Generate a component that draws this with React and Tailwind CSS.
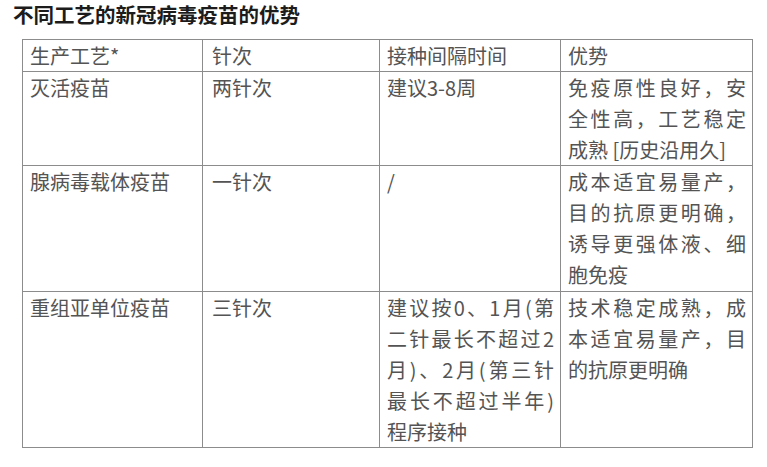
import React from "react";

const J = ({ children }) => (
  <span className="block text-justify [text-align-last:justify] whitespace-nowrap">{children}</span>
);
const L = ({ children }) => <span className="block whitespace-nowrap">{children}</span>;

function Cell({ children, className = "" }) {
  return <div className={"bg-white pl-[7px] pr-[6px] " + className}>{children}</div>;
}

export default function App() {
  return (
    <div
      className="w-[767px] h-[467px] bg-white overflow-hidden"
      style={{ fontFamily: '"Noto Sans CJK SC", "Noto Sans", sans-serif' }}
    >
      <h1 className="pl-[13px] pt-0 text-[20.5px] leading-[28px] font-bold text-[#1c1c1c]">
        不同工艺的新冠病毒疫苗的优势
      </h1>
      <div className="mt-[11px] ml-[22px] w-[731px] grid grid-cols-[179px_176px_180px_191px] grid-rows-[31px_93px_125px_155px] gap-px p-px bg-[#8c8c8c] text-[20px] leading-[31px] text-[#545454]">
        <Cell className="pl-2">生产工艺*</Cell>
        <Cell className="pl-[9px]">针次</Cell>
        <Cell className="pl-2">接种间隔时间</Cell>
        <Cell>优势</Cell>

        <Cell className="pl-2">灭活疫苗</Cell>
        <Cell className="pl-[9px]">两针次</Cell>
        <Cell className="pl-2">建议3-8周</Cell>
        <Cell>
          <J>免疫原性良好，安</J>
          <J>全性高，工艺稳定</J>
          <L>成熟 [历史沿用久]</L>
        </Cell>

        <Cell className="pl-2">腺病毒载体疫苗</Cell>
        <Cell className="pl-[9px]">一针次</Cell>
        <Cell className="pl-2">/</Cell>
        <Cell>
          <J>成本适宜易量产，</J>
          <J>目的抗原更明确，</J>
          <J>诱导更强体液、细</J>
          <L>胞免疫</L>
        </Cell>

        <Cell className="pl-2">重组亚单位疫苗</Cell>
        <Cell className="pl-[9px]">三针次</Cell>
        <Cell className="pl-2">
          <J>建议按0、1月(第</J>
          <J>二针最长不超过2</J>
          <J>月)、2月(第三针</J>
          <J>最长不超过半年)</J>
          <L>程序接种</L>
        </Cell>
        <Cell>
          <J>技术稳定成熟，成</J>
          <J>本适宜易量产，目</J>
          <L>的抗原更明确</L>
        </Cell>
      </div>
    </div>
  );
}
